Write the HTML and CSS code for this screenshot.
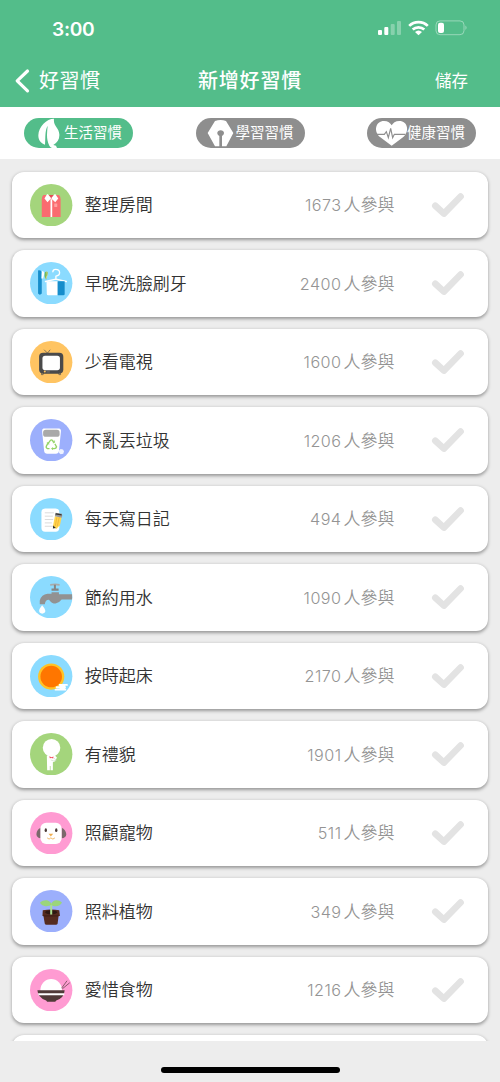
FILE: index.html
```html
<!DOCTYPE html>
<html lang="zh-Hant">
<head>
<meta charset="utf-8">
<title>新增好習慣</title>
<link rel="stylesheet" href="styles.css">
</head>
<body>
<svg class="defs" aria-hidden="true"><symbol id="check" viewBox="0 0 34 26"><path d="M4.3 13.7 12.9 21.6 29.6 4.5" fill="none" stroke="#e3e3e3" stroke-width="6.6" stroke-linecap="round" stroke-linejoin="round"/></symbol></svg>
<div class="screen">
  <header class="header">
    <div class="status">
      <span class="time">3:00</span>
      <svg class="indicators" viewBox="0 0 90 18" width="90" height="18">
        <g fill="#fff"><rect x="0" y="11" width="4" height="5" rx="1"/><rect x="6.3" y="8" width="4" height="8" rx="1"/><g opacity=".3"><rect x="12.7" y="5" width="4" height="11" rx="1"/><rect x="19" y="2" width="4" height="14" rx="1"/></g></g>
        <g fill="none" stroke="#fff" stroke-width="2.7"><path d="M31.2 6.9a13.3 13.3 0 0 1 18.6 0M34.7 10.6a8.4 8.4 0 0 1 11.6 0"/></g>
        <path d="M37 13.1a5.2 5.2 0 0 1 7 0L40.5 16.3z" fill="#fff"/>
        <rect x="58" y="1.9" width="28" height="13.8" rx="4" fill="none" stroke="#fff" stroke-opacity=".4"/>
        <path d="M87.5 6.5q2 2.200 0 4.5z" fill="#fff" opacity=".5"/><rect x="60" y="3.8" width="6" height="10.2" rx="2" fill="#fff"/>
      </svg>
    </div>
    <nav class="nav">
      <div class="back"><svg width="17" height="26" viewBox="0 0 17 26"><path d="M14.5 3 4.2 12.800 14.5 22.800" fill="none" stroke="#fff" stroke-width="3.2" stroke-linecap="round" stroke-linejoin="round"/></svg><span>好習慣</span></div>
      <h1 class="title">新增好習慣</h1>
      <span class="save">儲存</span>
    </nav>
  </header>
  <div class="tabs">
    <div class="tab active"><svg class="tab-icon" viewBox="0 0 108 90"><path d="M90 2C68 2 44 25 43 52c0 15 7 23 20 28 2-24-1-40 8-57-2 22-5 40 5 60 4 7 11 9 23 7l-3-7-8-2c13-8 19-18 18-32C105 29 87 25 90 2Z" fill="#fff"/></svg><span>生活習慣</span></div>
    <div class="tab"><svg class="tab-icon" viewBox="0 0 108 90"><path d="M35 45 57 9q17-6 33 0l22 36-21 40H78V54c9-4 8-17-4-17s-13 13-4 17v31H57Z" fill="#fff"/></svg><span>學習習慣</span></div>
    <div class="tab"><svg class="tab-icon" viewBox="0 0 108 90"><path d="M74 83 40 58C18 40 26 9 51 9c12 0 19 6 23 13 4-7 11-13 23-13 25 0 32 31 11 49Z" fill="#fff"/><path d="M29 49h23l6-8 6 18 7-28 6 28 5-10h33" fill="none" stroke="#8e8e8e" stroke-width="3.5"/></svg><span>健康習慣</span></div>
  </div>
  <main class="list">
    <div class="row">
      <svg class="icon" viewBox="0 0 126 126"><circle cx="63" cy="63" r="63" fill="#a4d57c"/><path d="M40 33h46q5 4 5 12v53H35V45q0-8 5-12" fill="#fa6b70"/><path d="M52 33h22l-11 13z" fill="#e34e55"/><path d="M61 45h5v53h-5zM51 30 43 43l9 11 11-12-9-11zM75 30l9 13-9 11-12-12 9-11z" fill="#fff"/><rect x="72" y="58" width="9" height="10" rx="1" fill="#ffa1a1"/></svg>
      <span class="name">整理房間</span><span class="count"><b>1673</b>人參與</span><svg class="check"><use href="#check"/></svg></div>
    <div class="row">
      <svg class="icon" viewBox="0 0 126 126"><circle cx="63" cy="63" r="63" fill="#8bdbff"/><path d="M24 25q7-1 11 4v65q-6 6-11 0z" fill="#168dcb"/><path d="M35 27q8 0 7 10l-3 12h-5z" fill="#fff"/><path d="M45 30q10-5 8 6-4 9-5 17-8-9-3-23" fill="#75b957"/><path d="M50 28q4 11-3 22" stroke="#ffdf8b" stroke-width="2" fill="none"/><path d="M68 29q0-7 8-7 12 0 12 10 0 8-11 10v9M46 58l31-7 31 7" stroke="#fff" stroke-width="4" fill="none" stroke-linecap="round" stroke-linejoin="round"/><path d="M49 57h34v42H54q-4 0-4-4z" fill="#fff"/><path d="M82 57h21v39q0 3-4 3H82z" fill="#168dcb"/></svg>
      <span class="name">早晚洗臉刷牙</span><span class="count"><b>2400</b>人參與</span><svg class="check"><use href="#check"/></svg></div>
    <div class="row">
      <svg class="icon" viewBox="0 0 126 126"><circle cx="63" cy="63" r="63" fill="#ffc462"/><path d="m42 26 10 10 8-10M35 94l-1 6h5l1-6M85 94l1 6h5l-1-6" stroke="#4a4a4a" stroke-width="2" fill="none"/><rect x="27" y="35" width="72" height="62" rx="12" fill="#4a4a4a"/><rect x="37" y="44" width="52" height="43" rx="8" fill="#fff"/><circle cx="44" cy="91" r="3" fill="#ffc462"/><path d="M49 92h10" stroke="#888" stroke-width="2"/></svg>
      <span class="name">少看電視</span><span class="count"><b>1600</b>人參與</span><svg class="check"><use href="#check"/></svg></div>
    <div class="row">
      <svg class="icon" viewBox="0 0 126 126"><circle cx="63" cy="63" r="63" fill="#9caffc"/><path d="M40 28h46q7 1 6 9l-6 58q-1 8-9 8H51q-8 0-9-8l-6-58q-1-8 4-9" fill="#fff"/><rect x="39" y="32" width="49" height="21" rx="8" fill="#a9a9a9"/><g fill="none" stroke="#94d469" stroke-width="4"><path d="m53 74 8-11q3-2 6 1l4 6M74 74l5 9q-1 5-7 5h-7M58 88h-6q-6-2-3-8l5-9"/><path d="m68 71 5-1v-6M68 84l-4 4 4 4M50 71l5-1 1 6" stroke-width="2.5"/></g><path d="m86 94 5-5 7 2 3 5-2 7-8 2-5-5z" fill="#eef2ff"/></svg>
      <span class="name">不亂丟垃圾</span><span class="count"><b>1206</b>人參與</span><svg class="check"><use href="#check"/></svg></div>
    <div class="row">
      <svg class="icon" viewBox="0 0 126 126"><circle cx="63" cy="63" r="63" fill="#8bdbff"/><rect x="34" y="31" width="53" height="69" rx="11" fill="#fff"/><path d="M44 44h27M44 54h24M44 64h25M44 74h21M44 84h24" stroke="#d4d4d4" stroke-width="2.5"/><path d="m74 54 20 3-5 24-11 11-10-7z" fill="#ffd64f"/><path d="m80 57-5 26M87 57l-6 27" stroke="#f2a92c" stroke-width="2"/><path d="m76 44 19 3q2 6-1 12l-20-5z" fill="#999"/><path d="m77 45 17 3v4l-19-3zM69 82l-1 9 9-2z" fill="#333"/></svg>
      <span class="name">每天寫日記</span><span class="count"><b>494</b>人參與</span><svg class="check"><use href="#check"/></svg></div>
    <div class="row">
      <svg class="icon" viewBox="0 0 126 126"><circle cx="63" cy="63" r="63" fill="#8bdbff"/><path d="M29 84V73q5-18 23-20h12v-5h22v6h39v16H94q-7 10-18 12-12 0-19-11-11-1-13 13z" fill="#929292"/><path d="M60 24q15-4 28 0v5q-15-3-28 0z" fill="#aaa"/><path d="M71 26h6v11h8v7H64v-7h7z" fill="#858585"/><path d="M36 87q-18 22 0 25 19-3 0-25" fill="#fff"/></svg>
      <span class="name">節約用水</span><span class="count"><b>1090</b>人參與</span><svg class="check"><use href="#check"/></svg></div>
    <div class="row">
      <svg class="icon" viewBox="0 0 126 126"><circle cx="63" cy="63" r="63" fill="#8bdbff"/><circle cx="63" cy="64" r="39" fill="#ffc326"/><circle cx="63" cy="64" r="32" fill="#ff7600"/><path d="M88 89h22M79 96h25M76 103h29" stroke="#fff" stroke-width="5.5" stroke-linecap="round"/><path d="M88 87h17v17H88z" fill="#fff"/></svg>
      <span class="name">按時起床</span><span class="count"><b>2170</b>人參與</span><svg class="check"><use href="#check"/></svg></div>
    <div class="row">
      <svg class="icon" viewBox="0 0 126 126"><circle cx="63" cy="63" r="63" fill="#a4d57c"/><circle cx="64" cy="44" r="26" fill="#fff"/><path d="M50 67h24l6 6-5 11-7 3v24h-7V98h-2v13h-8z" fill="#fff"/><path d="m57 69 7 3 6-2-1 6-5-2-5 1z" fill="#f45365"/><path d="m70 74 9 7-9 2-8-3" fill="none" stroke="#bdd4b1" stroke-width="1.5"/></svg>
      <span class="name">有禮貌</span><span class="count"><b>1901</b>人參與</span><svg class="check"><use href="#check"/></svg></div>
    <div class="row">
      <svg class="icon" viewBox="0 0 126 126"><circle cx="63" cy="63" r="63" fill="#ff9bd2"/><path d="M32 47q-12 5-13 19 1 11 13 12zM94 47q12 5 14 19-1 11-14 12z" fill="#7c686b"/><rect x="31" y="32" width="63" height="63" rx="17" fill="#fff"/><ellipse cx="47" cy="54" rx="3.5" ry="5.5" fill="#4c3c37"/><ellipse cx="78" cy="54" rx="3.5" ry="5.5" fill="#4c3c37"/><path d="M55 65h14l-7 8z" fill="#efae50"/><path d="M51 77q6 7 11 0 6 7 12 0" fill="none" stroke="#efae50" stroke-width="2.5"/></svg>
      <span class="name">照顧寵物</span><span class="count"><b>511</b>人參與</span><svg class="check"><use href="#check"/></svg></div>
    <div class="row">
      <svg class="icon" viewBox="0 0 126 126"><circle cx="63" cy="63" r="63" fill="#9caffc"/><path d="M38 60q26-4 49 0l2 17h-4l-3 23q-1 3-5 3H49q-4 0-5-3l-4-23h-3z" fill="#552b20"/><path d="M40 77h45" stroke="#321711" stroke-width="2"/><ellipse cx="63" cy="66" rx="18" ry="6" fill="#2e1813"/><path d="M60 73V39h6v34z" fill="#acdf90"/><path d="M63 44c-12 9-31 2-33-7 13-11 32-7 33 7 2-15 20-18 32-7-4 10-20 16-32 7" fill="#9bd57b"/></svg>
      <span class="name">照料植物</span><span class="count"><b>349</b>人參與</span><svg class="check"><use href="#check"/></svg></div>
    <div class="row">
      <svg class="icon" viewBox="0 0 126 126"><circle cx="63" cy="63" r="63" fill="#ff9bd2"/><circle cx="63" cy="62" r="32" fill="#fff"/><path d="M22 63h81q-1 22-25 31l-3 3H51l-3-3Q23 84 22 63" fill="#503a38"/><path d="M24 72h78v6H25z" fill="#fff"/><path d="m94 57 16-22M96 59l22-18" stroke="#503a38" stroke-width="2"/></svg>
      <span class="name">愛惜食物</span><span class="count"><b>1216</b>人參與</span><svg class="check"><use href="#check"/></svg></div>
    <div class="row"></div>
  </main>
  <footer class="footer"><div class="home"></div></footer>
</div>
</body>
</html>
```
FILE: styles.css
```css
* { box-sizing: border-box; }
body { margin: 0; font-family: Inter, "Noto Sans CJK TC", sans-serif; background: #ededed; }
.defs { position: absolute; width: 0; height: 0; }
.screen { width: 500px; height: 1082px; display: flex; flex-direction: column; overflow: hidden; background: #ededed; }
.header { height: 107px; background: #53bd8a; color: #fff; flex: none; }
.status { height: 53px; padding: 5px 32px 0 52px; display: flex; justify-content: space-between; align-items: center; }
.time { font-size: 19.2px; font-weight: 600; letter-spacing: -.3px; }
.indicators { display: block; margin-top: -2px; }
.nav { height: 54px; padding-top: 1px; display: grid; grid-template-columns: 1fr auto 1fr; align-items: center; }
.back { display: flex; align-items: center; gap: 9px; padding-left: 13px; font-size: 20px; letter-spacing: .5px; line-height: 26px; }
.title { margin: 0; font-size: 20px; font-weight: 500; letter-spacing: .8px; line-height: 26px; }
.save { justify-self: end; padding-right: 32px; font-size: 16.5px; line-height: 26px; }
.tabs { height: 52px; background: #fff; padding: 0 24px; display: flex; justify-content: space-between; align-items: center; flex: none; }
.tab { width: 109px; height: 30px; border-radius: 15px; background: #8e8e8e; color: #fff; display: flex; align-items: center; font-size: 14.5px; line-height: 20px; overflow: hidden; }
.tab.active { background: #53bd8a; }
.tab-icon { width: 36px; height: 30px; flex: none; margin-right: 4px; overflow: visible; }
.list { flex: none; height: 882px; padding: 12.5px 12px 0; display: flex; flex-direction: column; gap: 12px; overflow: hidden; }
.row { height: 66.5px; flex: none; display: flex; align-items: center; padding: 0 23px 0 18.3px; border-radius: 12px; background: #fff; box-shadow: 0 1.5px 3.5px rgba(0, 0, 0, .36); }
.icon { width: 42.4px; height: 42.4px; flex: none; }
.name { margin-left: 12px; padding-top: 1px; font-size: 17px; font-weight: 350; line-height: 24px; color: #333; white-space: nowrap; }
.count { margin-left: auto; padding-top: 1px; display: flex; align-items: baseline; font-size: 17px; font-weight: 350; line-height: 24px; color: #949494; white-space: nowrap; }
.count b { font-size: 16.2px; font-weight: 350; letter-spacing: .45px; margin-right: 2px; }
.check { width: 34px; height: 26px; margin-left: 36.5px; flex: none; }
.footer { height: 41px; flex: none; display: flex; justify-content: center; padding-top: 26px; }
.home { width: 179px; height: 6px; border-radius: 3px; background: #000; }
```
